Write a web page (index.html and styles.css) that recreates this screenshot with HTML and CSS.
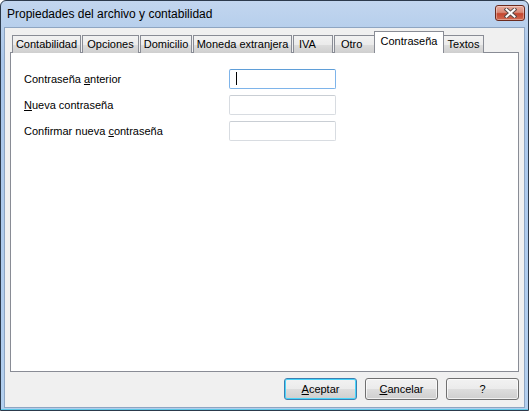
FILE: index.html
```html
<!DOCTYPE html>
<html lang="es">
<head>
<meta charset="utf-8">
<title>Propiedades del archivo y contabilidad</title>
<link rel="stylesheet" href="styles.css">
</head>
<body>
<div class="window">
  <div class="titlebar">
    <span class="title">Propiedades del archivo y contabilidad</span>
    <button class="close" aria-label="Cerrar">
      <svg width="13" height="10" viewBox="0 0 13 10">
        <path d="M2.5 1.5 L10.5 8.5 M10.5 1.5 L2.5 8.5" stroke="#5a4a48" stroke-width="4" stroke-linecap="square"/>
        <path d="M2.5 1.5 L10.5 8.5 M10.5 1.5 L2.5 8.5" stroke="#ffffff" stroke-width="2" stroke-linecap="square"/>
      </svg>
    </button>
  </div>
  <div class="client">
    <div class="tabs">
      <div class="tab t-conta">Contabilidad</div>
      <div class="tab t-opc">Opciones</div>
      <div class="tab t-dom">Domicilio</div>
      <div class="tab t-mon">Moneda extranjera</div>
      <div class="tab t-iva">IVA</div>
      <div class="tab t-otro">Otro</div>
      <div class="tab t-pass active">Contraseña</div>
      <div class="tab t-txt">Textos</div>
    </div>
    <div class="panel">
      <div class="form-row">
        <label class="label">Contraseña <u>a</u>nterior</label>
        <div class="field focused"><span class="caret"></span></div>
      </div>
      <div class="form-row">
        <label class="label"><u>N</u>ueva contraseña</label>
        <div class="field"></div>
      </div>
      <div class="form-row">
        <label class="label">Confirmar nueva <u>c</u>ontraseña</label>
        <div class="field"></div>
      </div>
    </div>
    <div class="buttons">
      <button class="btn default"><u>A</u>ceptar</button>
      <button class="btn"><u>C</u>ancelar</button>
      <button class="btn">?</button>
    </div>
  </div>
</div>
</body>
</html>
```

FILE: styles.css
```css
html, body {
  margin: 0;
  padding: 0;
  background: #ffffff;
}

body {
  width: 529px;
  height: 411px;
  overflow: hidden;
  font-family: "Liberation Sans", Arial, sans-serif;
  font-size: 11px;
  color: #000;
}

.window {
  box-sizing: border-box;
  width: 529px;
  height: 411px;
  border: 1px solid #2c3a4c;
  border-radius: 6px 6px 0 0;
  background: linear-gradient(to bottom, #c2d6ef 0px, #b7cfec 26px, #a9c6ea 60px, #b3cfee 100%);
  display: flex;
  flex-direction: column;
  padding: 0 3px 2px 3px;
  box-shadow: inset 0 -1px 0 #5ec8e6;
}

.titlebar {
  height: 26px;
  flex: none;
  display: flex;
  align-items: flex-start;
  justify-content: space-between;
}

.title {
  font-family: "Liberation Sans", Arial, sans-serif;
  font-size: 12px;
  margin: 6px 0 0 3px;
  color: #000;
}

.close {
  margin: 4px 0 0 0;
  width: 30px;
  height: 16px;
  padding: 0;
  border: 1px solid #6b2a1e;
  border-radius: 3px;
  background: linear-gradient(to bottom, #e8aa9c 0%, #d98a78 45%, #c4462f 55%, #d16a52 100%);
  display: flex;
  align-items: center;
  justify-content: center;
  box-shadow: inset 0 0 0 1px rgba(255, 255, 255, 0.35);
}

.client {
  flex: 1;
  background: #f0f0f0;
  border: 1px solid #8ea5c2;
  display: flex;
  flex-direction: column;
  padding: 4px 5px 0 5px;
}

.tabs {
  display: flex;
  align-items: flex-end;
  height: 21px;
  padding-left: 2px;
  position: relative;
  z-index: 1;
}

.tab {
  box-sizing: border-box;
  height: 18px;
  border: 1px solid #898c95;
  border-bottom: none;
  background: linear-gradient(to bottom, #f2f2f2 0%, #ebebeb 50%, #dddddd 51%, #cfcfcf 100%);
  display: flex;
  align-items: center;
  justify-content: center;
  margin-right: 1px;
  white-space: nowrap;
  padding-bottom: 1px;
}

.t-conta { width: 69px; }
.t-opc { width: 57px; }
.t-dom { width: 52px; }
.t-mon { width: 99px; }
.t-iva { width: 40px; justify-content: flex-start; padding-left: 5px; }
.t-otro { width: 41px; justify-content: flex-start; padding-left: 6px; }
.t-pass { width: 70px; }
.t-txt { width: 41px; }

.tab.active {
  height: 22px;
  background: #ffffff;
  margin-left: -2px;
  margin-right: -1px;
  padding-bottom: 3px;
  position: relative;
  z-index: 2;
}

.panel {
  box-sizing: border-box;
  width: 509px;
  height: 320px;
  margin-top: -1px;
  background: #ffffff;
  border: 1px solid #898c95;
  padding: 16px 0 0 13px;
  display: flex;
  flex-direction: column;
  gap: 6px;
}

.form-row {
  display: flex;
  align-items: center;
  height: 20px;
}

.label {
  width: 205px;
  margin-top: -1px;
}

.field {
  box-sizing: border-box;
  width: 107px;
  height: 20px;
  border: 1px solid #d8dce1;
  border-top-color: #c9ced4;
  border-radius: 2px;
  background: #ffffff;
  position: relative;
}

.field.focused {
  border-color: #7eb4ea;
  border-top-color: #5f9ed8;
}

.caret {
  position: absolute;
  left: 6px;
  top: 2px;
  width: 1px;
  height: 13px;
  background: #000;
}

.buttons {
  display: flex;
  justify-content: flex-end;
  gap: 8px;
  padding: 6px 0 0 0;
}

.btn {
  box-sizing: border-box;
  width: 73px;
  height: 22px;
  padding: 0;
  font-family: "Liberation Sans", Arial, sans-serif;
  font-size: 11px;
  color: #000;
  border: 1px solid #707070;
  border-radius: 3px;
  background: linear-gradient(to bottom, #f2f2f2 0%, #ebebeb 50%, #dddddd 51%, #cfcfcf 100%);
  box-shadow: inset 0 0 0 1px rgba(255, 255, 255, 0.7);
}

.btn.default {
  border-color: #3c7fb1;
  box-shadow: inset 0 0 0 1px #48d5fb;
}
```
